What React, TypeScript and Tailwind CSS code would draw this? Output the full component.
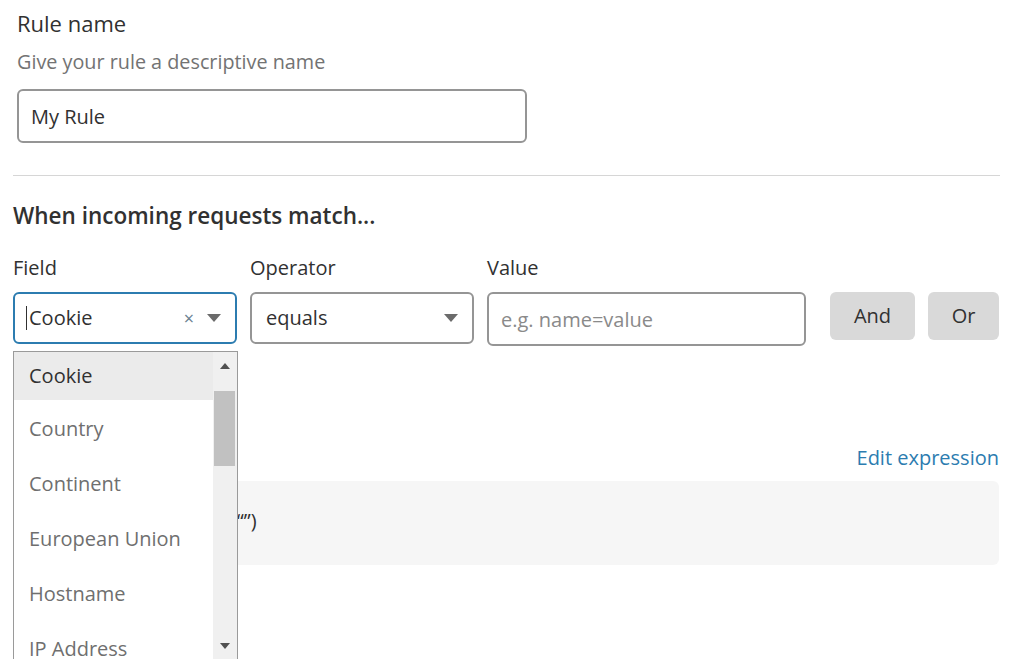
const fields = ["Cookie", "Country", "Continent", "European Union", "Hostname", "IP Address"];

function Caret() {
  return (
    <svg width="14" height="8" viewBox="0 0 14 8" className="text-[#6b6b6b]">
      <path d="M0 0h14L7 8z" fill="currentColor" />
    </svg>
  );
}

export default function App() {
  return (
    <div className="relative h-[659px] overflow-hidden bg-white font-['Open_Sans',sans-serif] text-[#313131]">
      <div className="px-[13px] pt-[7px]">
        {/* Rule name */}
        <div className="pl-[4px]">
          <h2 className="text-[22px] leading-[32px]">Rule name</h2>
          <p className="mt-[9px] text-[19.8px] leading-[28px] text-[#737373]">Give your rule a descriptive name</p>
          <input
            readOnly
            value="My Rule"
            className="mt-[13px] h-[54px] w-[510px] rounded-[6px] border-2 border-[#959595] px-[12px] text-[20px] text-[#313131] outline-none"
          />
        </div>

        <div className="mt-[32px] w-[987px] border-t border-[#d6d6d6]" />

        {/* Matching */}
        <h3 className="mt-[24px] text-[22.5px] font-semibold leading-[32px]">When incoming requests match...</h3>

        <div className="mt-[22px] flex items-start">
          <div className="w-[224px]">
            <div className="text-[20px] leading-[28px]">Field</div>
            <div className="mt-[10px] flex h-[52px] items-center rounded-[6px] border-2 border-[#2c7cb0] pl-[11px] pr-[14px]">
              <span className="h-[24px] w-px bg-[#313131]" />
              <span className="ml-[2px] flex-1 text-[20px]">Cookie</span>
              <span className="mr-[13px] text-[18px] text-[#6a7f90]">×</span>
              <Caret />
            </div>
          </div>
          <div className="ml-[13px] w-[224px]">
            <div className="text-[20px] leading-[28px]">Operator</div>
            <div className="mt-[10px] flex h-[52px] items-center rounded-[6px] border-2 border-[#959595] pl-[14px] pr-[14px]">
              <span className="flex-1 text-[20px]">equals</span>
              <Caret />
            </div>
          </div>
          <div className="ml-[13px] w-[319px]">
            <div className="text-[20px] leading-[28px]">Value</div>
            <input
              readOnly
              placeholder="e.g. name=value"
              className="mt-[10px] h-[54px] w-full rounded-[6px] border-2 border-[#959595] px-[12px] text-[20px] outline-none placeholder:text-[#8a8a8a]"
            />
          </div>
          <div className="ml-[24px] mt-[38px] flex gap-[13px]">
            <button className="h-[48px] w-[85px] rounded-[6px] bg-[#d9d9d9] text-[20px] text-[#313131]">And</button>
            <button className="h-[48px] w-[71px] rounded-[6px] bg-[#d9d9d9] text-[20px] text-[#313131]">Or</button>
          </div>
        </div>

        {/* Expression preview */}
        <div className="mt-[98px] flex w-[986px] items-center justify-between">
          <span className="text-[20px] leading-[28px] text-[#313131]">Expression Preview</span>
          <a className="text-[20px] leading-[28px] text-[#2c7cb0]">Edit expression</a>
        </div>
        <div className="mt-[9px] flex h-[84px] w-[986px] items-center rounded-[6px] bg-[#f6f6f6] px-[24px]">
          <span className="-mt-[4px] text-[20px] text-[#313131]">(http.cookie contains “”)</span>
        </div>
      </div>

      {/* Dropdown menu */}
      <div className="absolute left-[13px] top-[351px] flex h-[320px] w-[225px] border border-[#9a9a9a] bg-white">
        <ul className="flex-1">
          {fields.map((f, i) => (
            <li
              key={f}
              className={
                i === 0
                  ? "flex h-[48px] items-center bg-[#ebebeb] pl-[15px] text-[20px] text-[#313131]"
                  : "flex h-[55px] items-center pl-[15px] pt-[3px] text-[20px] text-[#6f6f6f]"
              }
            >
              {f}
            </li>
          ))}
        </ul>
        <div className="relative w-[24px] bg-[#f0f0f0]">
          <svg width="10" height="6" viewBox="0 0 10 6" className="absolute left-[7px] top-[11px]">
            <path d="M0 6h10L5 0z" fill="#505050" />
          </svg>
          <div className="absolute left-[1px] top-[39px] h-[75px] w-[21px] bg-[#c1c1c1]" />
          <svg width="10" height="6" viewBox="0 0 10 6" className="absolute left-[7px] top-[291px]">
            <path d="M0 0h10L5 6z" fill="#505050" />
          </svg>
        </div>
      </div>
    </div>
  );
}
